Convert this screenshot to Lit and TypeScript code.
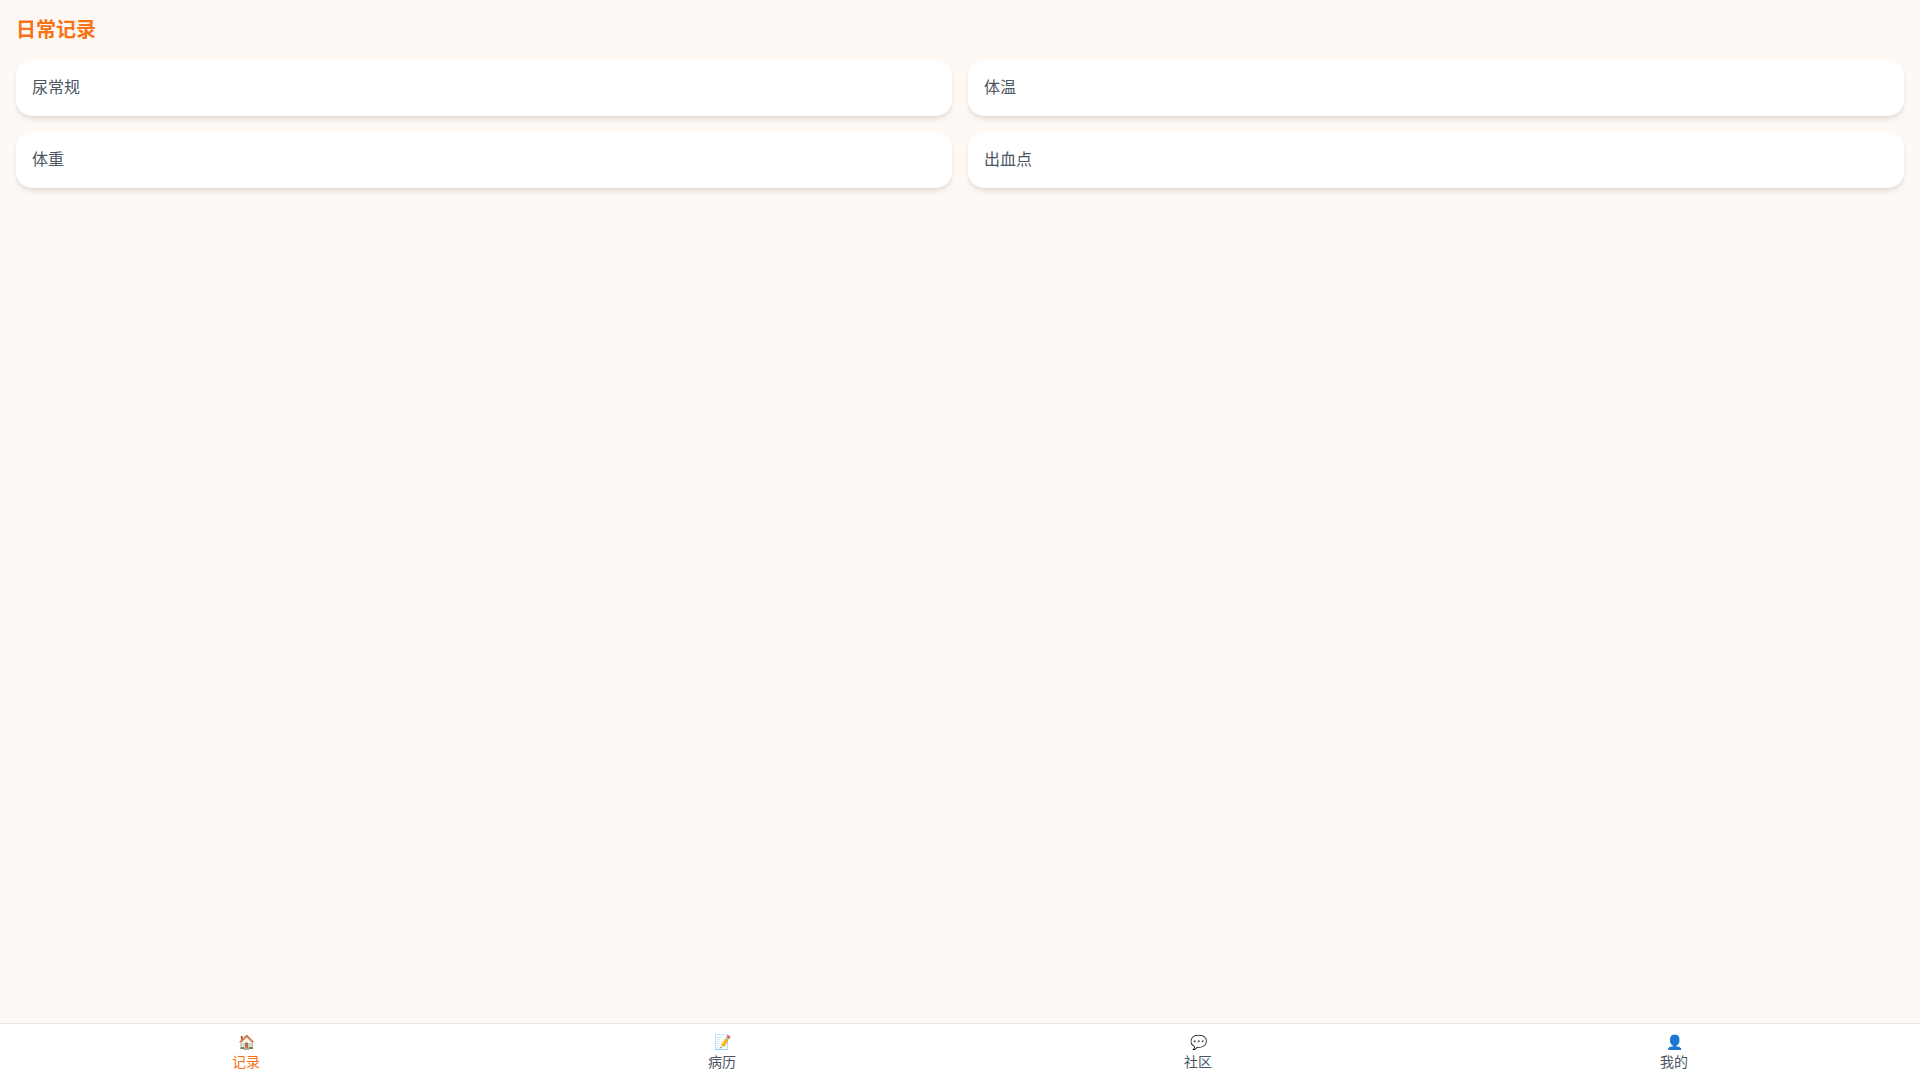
import { LitElement, html, css } from "lit";
import { customElement } from "lit/decorators.js";

@customElement("app-root")
export class AppRoot extends LitElement {
  static styles = css`
    :host {
      display: flex;
      flex-direction: column;
      height: 100vh;
      background: #fff9f5;
      font-family: Roboto, "Noto Sans CJK SC", sans-serif;
      color: #4b5563;
    }
    main {
      flex: 1;
      padding: 16px;
    }
    h1 {
      margin: 0 0 16px;
      font-size: 20px;
      line-height: 28px;
      font-weight: 600;
      color: #f97316;
    }
    .grid {
      display: grid;
      grid-template-columns: 1fr 1fr;
      gap: 16px;
    }
    .card {
      background: #fff;
      border-radius: 16px;
      padding: 16px;
      font-size: 16px;
      line-height: 24px;
      box-shadow: 0 4px 6px -1px rgba(0, 0, 0, 0.1), 0 2px 4px -2px rgba(0, 0, 0, 0.1);
    }
    nav {
      display: flex;
      background: #fff;
      border-top: 1px solid #e5e7eb;
      padding: 8px;
    }
    .tab {
      flex: 1;
      display: flex;
      flex-direction: column;
      align-items: center;
      font-size: 14px;
      line-height: 20px;
    }
    .tab.active {
      color: #f97316;
    }
  `;

  render() {
    const items = ["尿常规", "体温", "体重", "出血点"];
    const tabs = [
      ["🏠", "记录", true],
      ["📝", "病历", false],
      ["💬", "社区", false],
      ["👤", "我的", false],
    ] as const;
    return html`
      <main>
        <h1>日常记录</h1>
        <div class="grid">
          ${items.map((t) => html`<div class="card">${t}</div>`)}
        </div>
      </main>
      <nav>
        ${tabs.map(
          ([i, t, a]) => html`<div class="tab ${a ? "active" : ""}"><span>${i}</span><span>${t}</span></div>`
        )}
      </nav>
    `;
  }
}
